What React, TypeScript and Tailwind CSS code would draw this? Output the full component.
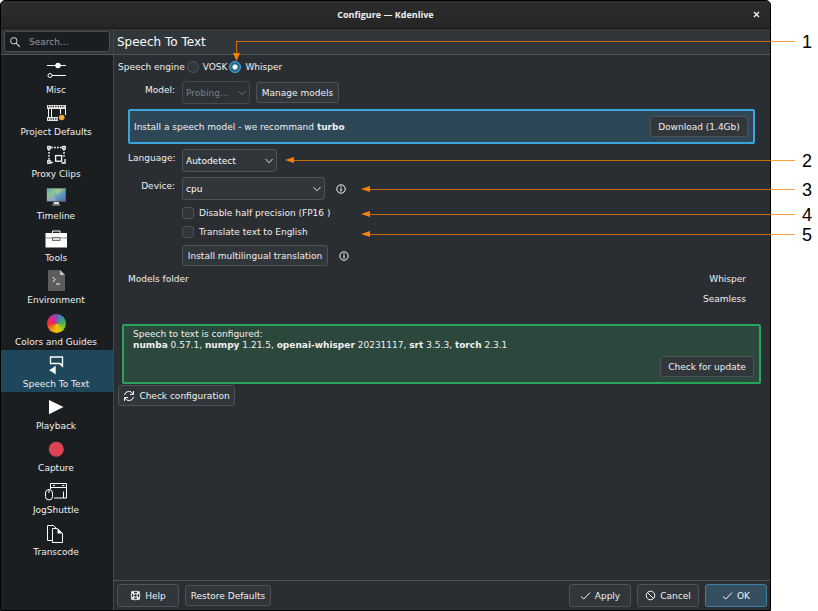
import type { ButtonHTMLAttributes, ReactNode, SelectHTMLAttributes } from "react";

const stroke = { fill: "none", stroke: "#fcfcfc", strokeWidth: 1 } as const;

function Icon({ children }: { children: ReactNode }) {
  return (
    <svg viewBox="0 0 22 22" className="size-[22px]" aria-hidden="true">
      {children}
    </svg>
  );
}

const icons = {
  misc: (
    <Icon>
      <g {...stroke}>
        <path d="M2 6.5H21M7 16.5H21" />
        <circle cx="5" cy="16.5" r="2" />
      </g>
      <circle cx="13" cy="6.5" r="2.8" fill="#fcfcfc" />
    </Icon>
  ),
  project: (
    <Icon>
      <path d="M2 4H21V8H2ZM2 16H13V20H2Z" fill="#e6e6e6" />
      <path d="M3 5.5H20M3 18H13" stroke="#1b1e20" strokeWidth="1.3" strokeDasharray="1.2 1.2" />
      <path d="M3.5 8V16M6.5 8V16M15.5 8V13M20.5 8V14" {...stroke} />
      <circle cx="16.7" cy="16.5" r="2.8" fill="#f5ab35" />
    </Icon>
  ),
  proxy: (
    <Icon>
      <path d="M6 4.5H17M4 6V18M19 6V14M6 19.5H9" {...stroke} strokeWidth="1.4" strokeDasharray="1.8 1.2" />
      <g {...stroke} strokeWidth="1.3">
        <rect x="2.8" y="3.5" width="2.4" height="2.4" />
        <rect x="17.8" y="3.5" width="2.4" height="2.4" />
        <rect x="2.8" y="17.8" width="2.4" height="2.4" />
        <rect x="10.6" y="12.6" width="6" height="5.6" />
        <path d="M20 16V20H16.5" />
      </g>
    </Icon>
  ),
  timeline: (
    <Icon>
      <defs>
        <linearGradient id="screen" x1="0" y1="0" x2="1" y2="1">
          <stop offset="0" stopColor="#5fb3b0" />
          <stop offset="0.35" stopColor="#8fc48f" />
          <stop offset="0.6" stopColor="#5e9fc4" />
          <stop offset="1" stopColor="#5568a8" />
        </linearGradient>
      </defs>
      <rect x="1.5" y="3" width="19.5" height="14" fill="#4d5357" />
      <rect x="2" y="3.5" width="18.5" height="12.5" fill="url(#screen)" />
      <path d="M2.5 16L9 9L11 16Z" fill="#a7a7c8" opacity="0.7" />
      <path d="M9 4L17 4L13 10Z" fill="#b9cf86" opacity="0.6" />
      <path d="M8.5 17H14V19.5H8.5Z" fill="#d8dadb" />
      <path d="M7 20H15.5" stroke="#9a9d9f" />
    </Icon>
  ),
  tools: (
    <Icon>
      <path d="M7.5 6V4H15V6" {...stroke} />
      <path d="M0.5 6H22V20.5H0.5Z" fill="#fcfcfc" />
      <path d="M0.5 11H22" stroke="#8a8d8f" />
      <rect x="7.5" y="10.5" width="7.5" height="3" fill="#dcdcdc" stroke="#6d7072" />
    </Icon>
  ),
  environment: (
    <Icon>
      <path d="M3 1H15L20 6V22H3Z" fill="#5c5c5c" />
      <path d="M15 1L20 6H15Z" fill="#c4c4c4" />
      <path d="M7.8 8L10.2 10.5L7.8 13M11 15H15" {...stroke} />
    </Icon>
  ),
  colors: (
    <span className="flex size-[22px] items-center justify-center pt-[2px]">
      <span className="size-[19px] shrink-0 rounded-full bg-[conic-gradient(#7a55b5,#3f8fa8_12%,#4fae4a_25%,#b4c81e_38%,#f2c500_50%,#f28a1e_62%,#ee2a3c_75%,#e0268c_88%,#7a55b5)]" />
    </span>
  ),
  speech: (
    <Icon>
      <path d="M5.5 4H17.5V13L14.5 10.5H5.5Z" {...stroke} strokeWidth="1.3" />
      <path d="M14 10.5H18V14.5Z" fill="#fcfcfc" />
      <path d="M4 17.3L8 14.8L10.7 12.8V21.5L8 19.5Z" fill="#fcfcfc" />
    </Icon>
  ),
  playback: (
    <Icon>
      <path d="M4 5L18.5 12L4 19.3Z" fill="#fcfcfc" />
    </Icon>
  ),
  capture: (
    <Icon>
      <circle cx="11.3" cy="12.3" r="7.5" fill="#da4453" />
    </Icon>
  ),
  jog: (
    <Icon>
      <g {...stroke}>
        <path d="M5.5 10V4.5H21.5V19H9M5.5 8.5H21.5M18.5 12.5V19" />
        <rect x="0.5" y="10.5" width="7" height="10.5" rx="3.5" />
        <path d="M4 10.5V14" />
        <path d="M8 6.5H10M17 6.5H19.5" />
      </g>
    </Icon>
  ),
  transcode: (
    <Icon>
      <g {...stroke}>
        <path d="M7.5 19.5H2.5V4.5H8.5L11 7" />
        <path d="M7.5 7.5H12.5L17.5 12.5V21.5H7.5Z" />
      </g>
      <path d="M8.5 4.5L12.5 8V7.5L17.5 12.5H12.5V8Z" fill="#fcfcfc" />
    </Icon>
  ),
};

const pages: { label: string; icon: ReactNode }[] = [
  { label: "Misc", icon: icons.misc },
  { label: "Project Defaults", icon: icons.project },
  { label: "Proxy Clips", icon: icons.proxy },
  { label: "Timeline", icon: icons.timeline },
  { label: "Tools", icon: icons.tools },
  { label: "Environment", icon: icons.environment },
  { label: "Colors and Guides", icon: icons.colors },
  { label: "Speech To Text", icon: icons.speech },
  { label: "Playback", icon: icons.playback },
  { label: "Capture", icon: icons.capture },
  { label: "JogShuttle", icon: icons.jog },
  { label: "Transcode", icon: icons.transcode },
];

type ButtonProps = ButtonHTMLAttributes<HTMLButtonElement>;

function Button({ className = "", children, ...rest }: ButtonProps) {
  return (
    <button
      type="button"
      className={`flex h-[21px] shrink-0 items-center justify-center gap-1 rounded-[3px] border border-[#4f5357] bg-[#31363b] whitespace-nowrap ${className}`}
      {...rest}
    >
      {children}
    </button>
  );
}

function FooterButton({ primary = false, children }: { primary?: boolean; children: ReactNode }) {
  return (
    <button
      type="button"
      className={`flex h-[23px] w-[62px] items-center justify-center gap-1 rounded-[3px] border ${
        primary ? "border-[#3f7fa3] bg-[#344e5f]" : "border-[#4f5357] bg-[#31363b]"
      }`}
    >
      {children}
    </button>
  );
}

function Select({ className = "", children, ...rest }: SelectHTMLAttributes<HTMLSelectElement>) {
  return (
    <span className="grid items-center">
      <select
        className={`col-start-1 row-start-1 h-[23px] appearance-none rounded-[3px] border border-[#4f5357] bg-[#31363b] pl-[3px] text-[#fcfcfc] disabled:border-[#46494d] disabled:bg-[#2d3135] disabled:text-[#7d8083] disabled:opacity-100 ${className}`}
        {...rest}
      >
        {children}
      </select>
      <svg
        viewBox="0 0 10 10"
        className={`pointer-events-none col-start-1 row-start-1 mr-[3px] size-[10px] justify-self-end ${
          rest.disabled ? "text-[#6a6d70]" : "text-[#e0e0e0]"
        }`}
        aria-hidden="true"
      >
        <path d="M1.5 3L5 6.8L8.5 3" fill="none" stroke="currentColor" />
      </svg>
    </span>
  );
}

function Info({ label }: { label: string }) {
  return (
    <button type="button" aria-label={label} className="flex size-[12px] items-center justify-center">
      <svg viewBox="0 0 12 12" className="size-[12px]" aria-hidden="true">
        <circle cx="6" cy="6" r="4.2" {...stroke} />
        <path d="M6 3.3V4.5M6 5.2V8.6" stroke="#fcfcfc" strokeWidth="1.2" />
      </svg>
    </button>
  );
}

function Check() {
  return (
    <svg viewBox="0 0 11 11" className="size-[11px]" aria-hidden="true">
      <path d="M1 6.5L3.8 9L10 2.5" {...stroke} />
    </svg>
  );
}

function Radio({ id, label, checked = false }: { id: string; label: string; checked?: boolean }) {
  return (
    <span className="flex items-center gap-1">
      <input
        type="radio"
        id={id}
        name="engine"
        defaultChecked={checked}
        className="size-[12px] appearance-none rounded-full border border-[#4f5357] bg-[#31363b] checked:border-[#3daee9] checked:bg-[radial-gradient(circle,#fcfcfc_2px,#2b6a8c_3px)]"
      />
      <label htmlFor={id}>{label}</label>
    </span>
  );
}

function Tick({ id, label }: { id: string; label: string }) {
  return (
    <div className="flex items-center gap-[5px]">
      <input
        type="checkbox"
        id={id}
        className="size-[12px] appearance-none rounded-[3px] border border-[#4f5357] bg-[#31363b] checked:bg-[#3daee9]"
      />
      <label htmlFor={id}>{label}</label>
    </div>
  );
}

function Callout({ place, label }: { place: string; label: string }) {
  return (
    <div className={`pointer-events-none absolute right-0 flex h-[20px] items-center ${place}`}>
      <svg viewBox="0 0 9 6" className="h-[6px] w-[9px]" aria-hidden="true">
        <path d="M0 3L9 0V6Z" fill="#ff7f00" />
      </svg>
      <CalloutEnd label={label} />
    </div>
  );
}

function CalloutEnd({ label }: { label: string }) {
  return (
    <>
      <span className="h-px flex-1 bg-[#ff7f00]/75" />
      <span className="w-[23px] pt-[2px] pl-[7px] font-['Liberation_Sans',Arial,sans-serif] text-[18px] leading-[20px] text-black">
        {label}
      </span>
    </>
  );
}

export default function App() {
  return (
    <div className="relative flex min-h-screen bg-white pr-[47px] font-['DejaVu_Sans',sans-serif] text-[9px] leading-[12px] text-[#f0f0f0]">
      <div className="flex min-w-0 flex-1 flex-col rounded-t-[5px] border border-black bg-[#2a2e32]">
        <header className="grid h-[28px] grid-cols-[1fr_auto_1fr] items-center rounded-t-[4px] border-b border-[#151718] bg-linear-to-b from-[#2d2d2d] to-[#252525]">
          <h1 className="col-start-2 font-['Open_Sans','Noto_Sans',sans-serif] font-bold">Configure — Kdenlive</h1>
          <button type="button" aria-label="Close" className="mr-[9px] justify-self-end">
            <svg viewBox="0 0 9 9" className="size-[9px]" aria-hidden="true">
              <path d="M2 2L7 7M7 2L2 7" {...stroke} strokeWidth="1.2" />
            </svg>
          </button>
        </header>

        <div className="flex h-[26px] shrink-0 border-b border-[#505457] bg-[#31363b]">
          <div className="flex w-[112px] shrink-0 items-center px-[3px]">
            <label className="flex h-[21px] w-full items-center gap-2 rounded-[3px] border border-[#4a4e52] bg-[#1b1e20] pl-[4px]">
              <svg viewBox="0 0 12 12" className="size-[12px] shrink-0" aria-hidden="true">
                <circle cx="4.8" cy="4.8" r="3.2" {...stroke} stroke="#d8d8d8" />
                <path d="M7.2 7.2L10.8 10.8" stroke="#d8d8d8" strokeWidth="1.2" />
              </svg>
              <input
                type="search"
                aria-label="Search"
                placeholder="Search..."
                className="w-full min-w-0 bg-transparent outline-none placeholder:text-[#96999b]"
              />
            </label>
          </div>
          <h2 className="flex flex-1 items-center border-l border-[#43474b] pl-[3px] text-[12px] leading-[16px] text-[#fcfcfc]">
            Speech To Text
          </h2>
        </div>

        <div className="flex flex-1">
          <nav className="w-[112px] shrink-0 bg-[#1b1e20] pt-px">
            {pages.map(({ label, icon }) => (
              <button
                key={label}
                type="button"
                aria-current={label === "Speech To Text" ? "page" : undefined}
                className="flex h-[42px] w-full flex-col items-center gap-[3px] pt-[3px] pr-[2px] aria-[current=page]:bg-[#1f475c]"
              >
                {icon}
                <span>{label}</span>
              </button>
            ))}
          </nav>

          <div className="flex min-w-0 flex-1 flex-col border-l border-[#43474b]">
            <main className="flex flex-1 flex-col px-[4px] pt-[6px]">
              <div role="radiogroup" aria-label="Speech engine" className="flex items-center gap-[2px]">
                <span>Speech engine</span>
                <Radio id="vosk" label="VOSK" />
                <Radio id="whisper" label="Whisper" checked />
              </div>

              <div className="mt-2 mr-[11px] ml-[10px] grid grid-cols-[47px_1fr] gap-x-[7px] gap-y-[5px]">
                <label htmlFor="model" className="pt-[3px] text-right">
                  Model:
                </label>
                <div className="flex items-center gap-[6px]">
                  <Select id="model" disabled className="w-[68px]">
                    <option>Probing...</option>
                  </Select>
                  <Button className="w-[83px]">Manage models</Button>
                </div>

                <div className="col-span-2 flex h-[35px] items-center justify-between rounded-[2px] border-2 border-[#3ba4db] bg-[#2e4756] pr-[5px] pl-[4px]">
                  <p>
                    Install a speech model - we recommand <b>turbo</b>
                  </p>
                  <Button className="w-[98px]">Download (1.4Gb)</Button>
                </div>

                <label htmlFor="language" className="pt-[3px] text-right">
                  Language:
                </label>
                <div className="flex">
                  <Select id="language" className="w-[95px]">
                    <option>Autodetect</option>
                  </Select>
                </div>

                <label htmlFor="device" className="pt-[3px] text-right">
                  Device:
                </label>
                <div className="flex items-center gap-[10px]">
                  <Select id="device" className="w-[143px]">
                    <option>cpu</option>
                  </Select>
                  <Info label="About devices" />
                </div>

                <div className="col-start-2 flex flex-col gap-[7px] pt-[2px]">
                  <Tick id="half" label="Disable half precision (FP16 )" />
                  <Tick id="translate" label="Translate text to English" />
                  <div className="flex items-center gap-[10px]">
                    <Button className="w-[146px]">Install multilingual translation</Button>
                    <Info label="About translation" />
                  </div>
                </div>
              </div>

              <div className="mt-[7px] mr-[20px] ml-[10px] flex justify-between">
                <span>Models folder</span>
                <div className="flex flex-col gap-2 text-right">
                  <span>Whisper</span>
                  <span>Seamless</span>
                </div>
              </div>

              <div className="mt-[19px] mr-[5px] ml-[4px] flex min-h-[60px] flex-col justify-between rounded-[2px] border-2 border-[#27a55a] bg-[#2c473b] px-[5px] pt-[3px] pb-[5px]">
                <p className="pl-[4px] leading-[11px]">
                  Speech to text is configured:
                  <br />
                  <b>numba</b> 0.57.1, <b>numpy</b> 1.21.5, <b>openai-whisper</b> 20231117, <b>srt</b> 3.5.3,{" "}
                  <b>torch</b> 2.3.1
                </p>
                <Button className="w-[94px] self-end">Check for update</Button>
              </div>

              <Button className="mt-px w-[117px] self-start">
                <svg viewBox="0 0 12 12" className="size-[12px]" aria-hidden="true">
                  <path d="M1.5 5A4.5 4.5 0 0 1 10 4M10.5 1V4.5H7M10.5 7A4.5 4.5 0 0 1 2 8M1.5 11V7.5H5" {...stroke} />
                </svg>
                Check configuration
              </Button>
            </main>

            <footer className="flex items-center justify-between border-t border-[#505457] px-[3px] py-[3px]">
              <div className="flex items-center gap-[6px]">
                <FooterButton>
                  <svg viewBox="0 0 11 11" className="size-[11px]" aria-hidden="true">
                    <circle cx="5.5" cy="5.5" r="4.3" {...stroke} />
                    <circle cx="5.5" cy="5.5" r="1.8" {...stroke} />
                    <path d="M1.5 1.5L4 4M9.5 1.5L7 4M1.5 9.5L4 7M9.5 9.5L7 7" {...stroke} strokeWidth="1.8" />
                  </svg>
                  Help
                </FooterButton>
                <Button className="w-[86px]">Restore Defaults</Button>
              </div>
              <div className="flex gap-[6px]">
                <FooterButton>
                  <Check />
                  Apply
                </FooterButton>
                <FooterButton>
                  <svg viewBox="0 0 11 11" className="size-[11px]" aria-hidden="true">
                    <circle cx="5.5" cy="5.5" r="4.3" {...stroke} />
                    <path d="M2.5 2.5L8.5 8.5" {...stroke} />
                  </svg>
                  Cancel
                </FooterButton>
                <FooterButton primary>
                  <Check />
                  OK
                </FooterButton>
              </div>
            </footer>
          </div>
        </div>
      </div>

      <div className="pointer-events-none absolute top-[31px] right-0 left-[236px] flex h-[20px] items-center">
        <CalloutEnd label="1" />
      </div>
      <div className="pointer-events-none absolute top-[41px] left-[233px] flex flex-col items-center">
        <span className="h-[12px] w-px bg-[#ff7f00]/75" />
        <svg viewBox="0 0 7 8" className="h-[8px] w-[7px]" aria-hidden="true">
          <path d="M0 0H7L3.5 8Z" fill="#ff7f00" />
        </svg>
      </div>
      <Callout place="top-[150px] left-[285px]" label="2" />
      <Callout place="top-[179px] left-[361px]" label="3" />
      <Callout place="top-[204px] left-[361px]" label="4" />
      <Callout place="top-[224px] left-[361px]" label="5" />
    </div>
  );
}
